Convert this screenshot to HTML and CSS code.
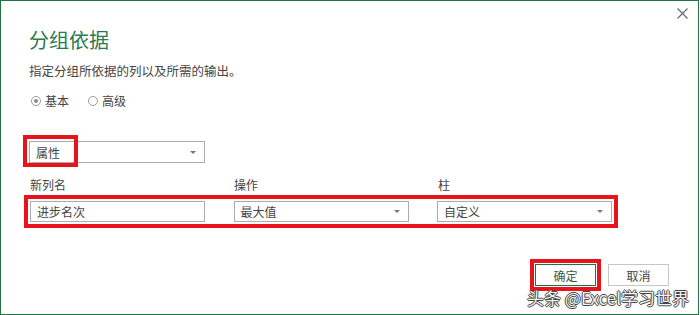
FILE: index.html
```html
<!DOCTYPE html>
<html lang="zh-CN">

<head>
    <meta charset="UTF-8">
    <title>分组依据</title>
    <link rel="stylesheet" href="styles.css">
</head>

<body>
    <div class="dialog">
        <div class="topbar">
            <svg class="close" width="11" height="11" viewBox="0 0 11 11">
                <path d="M0.5 0.5 L10.5 10.5 M10.5 0.5 L0.5 10.5" stroke="#666" stroke-width="1.1" fill="none" />
            </svg>
        </div>

        <div class="content">
            <h1 class="title">分组依据</h1>
            <p class="subtitle">指定分组所依据的列以及所需的输出。</p>

            <div class="radios">
                <span class="radio checked"><span class="dot"></span>基本</span>
                <span class="radio"><span class="dot"></span>高级</span>
            </div>

            <div class="group-by">
                <div class="select">属性<span class="arrow"></span></div>
                <!-- annotation box -->
                <div class="mark mark-small"></div>
            </div>

            <div class="labels">
                <span>新列名</span>
                <span>操作</span>
                <span>柱</span>
            </div>
            <div class="fields">
                <div class="textbox">进步名次</div>
                <div class="select">最大值<span class="arrow"></span></div>
                <div class="select">自定义<span class="arrow"></span></div>
            </div>

            <div class="buttons">
                <button class="btn btn-ok">确定</button>
                <button class="btn">取消</button>
            </div>
        </div>

        <div class="watermark">头条 @Excel学习世界</div>
    </div>
</body>

</html>
```

FILE: styles.css
```css
body {
    margin: 0;
    background: #fff;
    font-family: "Noto Sans CJK SC", "Liberation Sans", sans-serif;
    color: #444;
}

.dialog {
    position: relative;
    width: 699px;
    height: 315px;
    box-sizing: border-box;
    border: 1px solid #217346;
    background: #fff;
}

.topbar {
    height: 27px;
    display: flex;
    justify-content: flex-end;
}

.close {
    margin-top: 7px;
    margin-right: 10px;
}

.content {
    padding-left: 28px;
}

.title {
    margin: 0;
    font-size: 20px;
    line-height: 24px;
    font-weight: normal;
    color: #2a7a4e;
}

.subtitle {
    margin: 10px 0 0;
    font-size: 12.5px;
    line-height: 18px;
    color: #444;
}

.radios {
    margin-top: 12px;
    display: flex;
    gap: 19px;
    padding-left: 2px;
    font-size: 12px;
    line-height: 18px;
}

.radio {
    display: flex;
    align-items: center;
    gap: 4px;
}

.radio .dot {
    width: 8px;
    height: 8px;
    border: 1px solid #9a9a9a;
    border-radius: 50%;
    display: flex;
    align-items: center;
    justify-content: center;
}

.radio.checked .dot::after {
    content: "";
    width: 4px;
    height: 4px;
    border-radius: 50%;
    background: #8a8a8a;
}

.group-by {
    position: relative;
    margin-top: 31px;
    width: 176px;
}

.select,
.textbox {
    height: 21px;
    box-sizing: border-box;
    border: 1px solid #ababab;
    padding-left: 6px;
    font-size: 12px;
    line-height: 19px;
    color: #444;
    display: flex;
    align-items: center;
    justify-content: space-between;
}

.arrow {
    width: 0;
    height: 0;
    margin-right: 8px;
    border-left: 3px solid transparent;
    border-right: 3px solid transparent;
    border-top: 3px solid #777;
}

.group-by .select {
    height: 22px;
}

.mark {
    position: absolute;
    border: 4px solid #e8141c;
}

.mark-small {
    left: -6px;
    top: -6px;
    width: 47px;
    height: 24px;
}

.labels {
    margin-top: 13px;
    display: grid;
    grid-template-columns: 175px 175px 175px;
    column-gap: 29px;
    padding-left: 1px;
    font-size: 12px;
    line-height: 18px;
}

.fields {
    margin-top: 7px;
    margin-left: 1px;
    width: 582px;
    display: grid;
    grid-template-columns: 175px 175px 175px;
    column-gap: 28.5px;
    outline: 4px solid #e8141c;
    outline-offset: 2px;
}

.buttons {
    margin-top: 42px;
    padding-right: 29px;
    display: flex;
    justify-content: flex-end;
    gap: 12px;
}

.btn {
    width: 61px;
    height: 22px;
    padding: 0;
    background: #fff;
    border: 1px solid #c6c6c6;
    font-family: "Noto Sans CJK SC", sans-serif;
    font-size: 12px;
    color: #444;
}

.btn-ok {
    border-color: #217346;
    color: #3a5a40;
    outline: 4px solid #e8141c;
    outline-offset: 1px;
}

.watermark {
    position: absolute;
    right: 9px;
    bottom: 6px;
    font-size: 17px;
    line-height: 20px;
    color: #f4f4f4;
    text-shadow: -1px 0 #444, 1px 0 #444, 0 -1px #444, 0 1px #444;
}
```
